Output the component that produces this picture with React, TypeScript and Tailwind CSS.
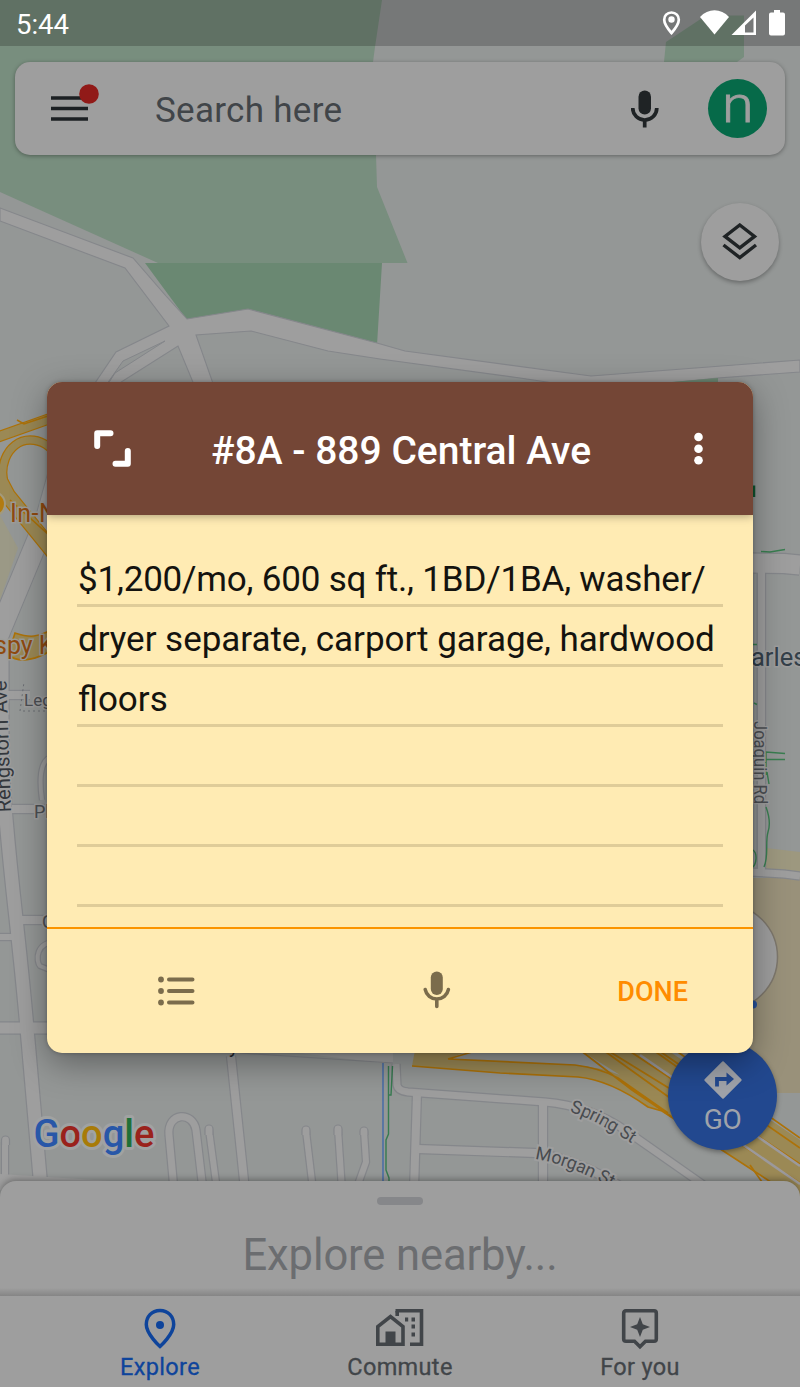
import type { ReactNode } from "react";

const EDGE = "#85878b";
const ROAD = "#9e9e9e";
const FWY = "#9b8955";
const FWY_EDGE = "#ad7208";

function Streets({ items, c = ROAD, e = EDGE }: { items: [string, number][]; c?: string; e?: string }) {
  return (
    <g fill="none" strokeLinejoin="round">
      {items.map(([d, w]) => (
        <path key={"e" + d} d={d} stroke={e} strokeWidth={w + 2.4} />
      ))}
      {items.map(([d, w]) => (
        <path key={"f" + d} d={d} stroke={c} strokeWidth={w} />
      ))}
    </g>
  );
}

function MapCanvas() {
  return (
    <svg
      className="absolute inset-0 font-[Roboto,sans-serif]"
      width="800"
      height="1387"
      viewBox="0 0 800 1387"
    >
      <rect width="800" height="1387" fill="#949796" />
      <path d="M0 0H382L375 47L373 62L376 155L377 187L407.5 263H158L0 192Z" fill="#788e7e" />
      <path d="M664 62L666 42L706 15.500H744V57L737 62Z" fill="#788e7e" />
      <path d="M145 263H382L377 345L250 318L187 320Z" fill="#6a8872" />

      {/* northern roads */}
      <path
        d="M0 208L133 258L166 296L187 319L248 309L377 343L405 351L591 376L800 360V372L718 378L600 390L520 378L380 359L328 351L251 331L196 335L216 392H197L178 346L115 386H93L116 352L169 326L125 268L0 221Z"
        fill={ROAD}
        stroke={EDGE}
        strokeWidth="1.1"
      />
      <path d="M104 388L123 361L165 341L115 373L108 384Z" fill="#949796" stroke={EDGE} strokeWidth="1" />
      <path d="M660 383L718 378V386H660Z" fill="#6f8a75" />

      {/* west side */}
      <path d="M0 515L18 548L0 600Z" fill="#9b9986" />
      <path d="M60 470L46 520L-4 640" stroke={EDGE} strokeWidth="23" fill="none" />
      <path d="M60 470L46 520L-4 640" stroke={ROAD} strokeWidth="21" fill="none" />
      <Streets
        items={[
          ["M2 640V760C6 850 18 920 28 1040L42 1200", 13],
          ["M0 695H30", 8],
          ["M12 809H60", 8],
          ["M20 920H60", 8],
          ["M-4 937H14", 6],
          ["M-4 1028H60", 11],
          ["M60 758C42 752 38 772 42 800", 4],
          ["M60 942C34 940 36 962 40 966L60 974", 4],
        ]}
      />
      <path d="M60 711L20 711L24 682" stroke="#6b6e73" strokeWidth="1" strokeDasharray="2 3" fill="none" />
      <Streets
        c={FWY}
        e={FWY_EDGE}
        items={[
          ["M-5 438L60 415", 9],
          ["M12 500C-8 470 8 440 30 440C42 440 50 446 58 456", 7],
          ["M-8 466L8 496L60 560", 14],
        ]}
      />
      <path d="M10 500L60 545M17 420L24 424L60 412" stroke={FWY_EDGE} strokeWidth="1.6" fill="none" />
      <path d="M60 622C40 642 24 636 15 633L8 655C20 664 38 660 60 645Z" fill={FWY} stroke={FWY_EDGE} strokeWidth="1.6" />
      <circle cx="-7" cy="504" r="12" fill="#b27b10" stroke="#a39a7c" strokeWidth="2" />
      <g fill="#8f4a10" stroke="#9c9c98" strokeWidth="3" paintOrder="stroke" fontSize="25">
        <text x="10" y="522" letterSpacing="0.5">In-N</text>
        <text x="-6" y="654">spy K</text>
      </g>
      <g fill="#4c4f53" stroke="#9e9e9e" strokeWidth="3" paintOrder="stroke" fontSize="18">
        <text x="24" y="706" fontSize="17">Leg</text>
        <text x="34" y="818">Pl</text>
        <text x="42" y="928">C</text>
        <text transform="translate(11 812) rotate(-92)" fontSize="20" fill="#33373c">Rengstorff Ave</text>
      </g>

      {/* east side */}
      <path d="M766 848L800 852V881H766Z" fill="#9d987f" />
      <path d="M750 878H800V1093H750Z" fill="#99917a" />
      <Streets
        items={[
          ["M750 563L784 563.500L800 565", 19],
          ["M761.500 570V872", 7],
          ["M750 872L784 874L800 876", 7],
        ]}
      />
      <path d="M757 574V868M753 574V868" stroke={EDGE} strokeWidth="1" />
      <circle cx="724.500" cy="957" r="53" fill={ROAD} stroke="#7d776c" strokeWidth="1.5" />
      <circle cx="753" cy="1004.500" r="4" fill="#2855a2" />
      <g fill="none" stroke="#397e50" strokeWidth="1.4">
        <path d="M761 551.500L770 552L785 549.500M766 775V752L785 753.500M766 759.500H785M767 772L769 784M766 807C770 818 770 826 768 832C765 842 769 856 764 867M753 850C758 854 756 864 753 867M753 644.500H757M754 703L757 704.500" />
        <path d="M754 485.500V497" stroke="#0f5a32" strokeWidth="2.500" />
      </g>
      <g fill="#34404a" stroke="#9e9e9e" strokeWidth="3" paintOrder="stroke">
        <text x="751" y="665.500" fontSize="25.500">arles</text>
        <text transform="translate(754 721) rotate(90)" fontSize="18" fill="#4c4f53" textLength="83" lengthAdjust="spacingAndGlyphs">Joaquin Rd</text>
      </g>

      {/* southern streets */}
      <path d="M60 1045H230L382 1063L393 1063V1045Z" fill={ROAD} />
      <path d="M240 1053L393 1063" stroke={EDGE} strokeWidth="1.2" />
      <Streets
        items={[
          ["M231 1056L245 1190", 8],
          ["M396 1064L397 1085Q398 1091 408 1092L545 1102Q590 1106 625 1130L725 1200", 7],
          ["M417 1093L414 1190", 8],
          ["M543 1104V1190", 8],
          ["M418 1149L535 1153Q590 1162 640 1200", 8],
          ["M174 1190L169 1135C167 1112 193 1111 196 1130L203 1190", 7],
          ["M209 1130L217 1190", 6],
          ["M306 1131L313 1190", 6],
          ["M338 1129L342 1190", 6],
          ["M364 1131L366 1162L356 1190", 6],
          ["M5 1142V1190", 6],
        ]}
      />
      <path d="M0 1174L160 1184V1190H0Z" fill={ROAD} />
      <g fill={ROAD} stroke={EDGE} strokeWidth="1.2">
        <path d="M205 1135V1129a4 4 0 0 1 8 0V1135M302 1135V1130a4 4 0 0 1 8 0V1135M334 1135V1129a4 4 0 0 1 8 0V1135M360 1135V1131a4 4 0 0 1 8 0V1135M1.500 1145V1140a4 4 0 0 1 8 0V1145" />
      </g>
      <path d="M383 1063V1190" stroke="#4169a8" strokeWidth="1.4" />
      <path d="M388.500 1066V1134L386 1140V1170L389 1178V1190M392.500 1066L391 1095H389" stroke="#367b50" strokeWidth="1.4" fill="none" />

      {/* freeway, south east */}
      <path d="M415 1050L412 1066L500 1073L578 1077Q610 1080 648 1107L662 1111L800 1201V1140L660 1045Z" fill={FWY} />
      <path d="M470 1050L580 1050L620 1075Q600 1067 575 1065L448 1059Z" fill="#949796" />
      <g fill="none" stroke={FWY_EDGE} strokeWidth="1.7">
        <path d="M412 1066L500 1073L578 1077Q610 1080 648 1107L662 1111L800 1201" />
        <path d="M448 1059L575 1065Q600 1068 618 1078L668 1113M448 1059L472 1052M580 1050L632 1090L672 1117M603 1050L670 1098L800 1183M607 1050L672 1090M628 1050L800 1164M653 1050L690 1076M658 1050L800 1148M675 1050L800 1138M750 1165L762 1182" />
      </g>
      <path d="M640 1055L800 1166M736 1140L800 1184" stroke="#9b999c" strokeWidth="2.500" />
      <path d="M779 1045H800V1093H779Z" fill="#99917a" />

      <g fill="#484b4f" stroke="#9e9e9e" strokeWidth="4" paintOrder="stroke" fontSize="18">
        <path id="spring" d="M570 1112Q594 1118 650 1155" fill="none" stroke="none" />
        <path id="morgan" d="M535 1159Q570 1164 625 1195" fill="none" stroke="none" />
        <text letterSpacing="-0.300"><textPath href="#spring">Spring St</textPath></text>
        <text letterSpacing="-0.100"><textPath href="#morgan">Morgan St</textPath></text>
      </g>
      <text x="229" y="1053" fontSize="20" fill="#26292d">y</text>

      <text
        x="33.500"
        y="1147"
        fontSize="39.500"
        fontWeight="500"
        textLength="121"
        lengthAdjust="spacingAndGlyphs"
        stroke="#a0a2a2"
        strokeWidth="6"
        strokeLinejoin="round"
        paintOrder="stroke"
      >
        <tspan fill="#2857a8">G</tspan>
        <tspan fill="#9a221c">o</tspan>
        <tspan fill="#a87b08">o</tspan>
        <tspan fill="#2857a8">g</tspan>
        <tspan fill="#1f7038">l</tspan>
        <tspan fill="#9a221c">e</tspan>
      </text>
    </svg>
  );
}

function StatusBar() {
  return (
    <header className="flex h-[46px] items-center justify-between bg-black/20 pl-4">
      <span className="pt-[3px] text-[27.5px] leading-none text-white">5:44</span>
      <svg width="140" height="46" viewBox="660 0 140 46" fill="white">
        <path d="M671.500 12.500C667 12.500 664.200 15.800 664.200 19.700C664.200 24.500 671.500 33 671.500 33S678.800 24.500 678.800 19.700C678.800 15.800 676 12.500 671.500 12.500Z" fill="none" stroke="white" strokeWidth="2.700" />
        <circle cx="671.500" cy="19.500" r="3.200" />
        <path d="M714.500 34.500L700 17C708 8 721 8 729 17Z" />
        <path fillRule="evenodd" d="M731.500 35L756 10.500V35ZM745 32.500H753.500V17.500L745 25.500Z" />
        <path d="M774 10H780V12.500H783Q785 12.500 785 14.500V33.500Q785 35.500 783 35.500H771Q769 35.500 769 33.500V14.500Q769 12.500 771 12.500H774Z" />
      </svg>
    </header>
  );
}

function SearchBar() {
  return (
    <div className="mx-[15px] mt-4 flex h-[93px] items-center rounded-[15px] bg-[#9e9e9e] shadow-[0_1px_4px_rgba(0,0,0,0.35)]">
      <svg className="ml-9 shrink-0" width="48" height="50" viewBox="51 83 48 50">
        <path d="M51 97H88M51 107.500H88M51 118H88" stroke="#1c2023" strokeWidth="3.700" />
        <circle cx="89" cy="93" r="9.800" fill="#911a18" />
      </svg>
      <span className="ml-[56px] grow pt-[3px] text-[35px] leading-none tracking-[0.3px] text-[#414549]">Search here</span>
      <svg className="mr-[49px] shrink-0" width="28" height="38" viewBox="631 91 28 38">
        <rect x="638.500" y="91.500" width="12.500" height="24" rx="6.250" fill="#1f2325" />
        <path d="M632.700 109A12 12 0 0 0 656.800 109M644.700 120.500V128.500" fill="none" stroke="#1f2325" strokeWidth="3.700" />
      </svg>
      <span className="mr-[18px] flex size-[59px] shrink-0 items-center justify-center rounded-full bg-[#066a49] text-[50px] leading-none font-light text-[#9e9e9e]">
        <span className="-mt-[7px] scale-x-115 [-webkit-text-stroke:0.8px_currentColor]">n</span>
      </span>
    </div>
  );
}

function LayersButton() {
  return (
    <button className="mt-12 mr-[21px] flex size-[78px] items-center justify-center self-end rounded-full bg-[#9e9e9e] shadow-[0_2px_4px_rgba(0,0,0,0.3)]">
      <svg width="36" height="38" viewBox="722 223 36 38" fill="none" stroke="#1f2325" strokeWidth="3.400">
        <path d="M739.800 225L754.500 236.400L739.800 247.800L725 236.400Z" />
        <path d="M723.500 245L739.800 257.600L756 245" />
      </svg>
    </button>
  );
}

function GoButton() {
  return (
    <button className="mr-[23px] mb-[31px] flex size-[109px] flex-col items-center self-end rounded-full bg-[#22488f] pt-[19px] text-[#9fa3aa] shadow-[0_2px_5px_rgba(0,0,0,0.35)]">
      <svg width="40" height="40" viewBox="0 0 40 40">
        <rect x="6.500" y="6.500" width="27" height="27" rx="1" transform="rotate(45 20 20)" fill="#a0a3aa" />
        <path d="M14 26.500V19H26" fill="none" stroke="#22488f" strokeWidth="3.800" />
        <path d="M23.500 12.500L31 19L23.500 25.500Z" fill="#22488f" />
      </svg>
      <span className="mt-[6px] text-[28px] leading-none tracking-[-0.5px]">GO</span>
    </button>
  );
}

function NavItem({ label, color, children }: { label: string; color: string; children: ReactNode }) {
  return (
    <div className={`flex w-[240px] flex-col items-center ${color}`}>
      <svg width="50" height="44" viewBox="0 0 50 44" fill="none" stroke="currentColor">
        {children}
      </svg>
      <span className="mt-[4px] text-[23.5px] leading-[26px] tracking-[0.35px] [-webkit-text-stroke:0.3px_currentColor]">{label}</span>
    </div>
  );
}

function BottomArea() {
  return (
    <div>
      <div className="flex h-[115px] flex-col items-center rounded-t-[16px] bg-[#9e9e9e] pt-4 shadow-[0_-2px_6px_rgba(0,0,0,0.3)]">
        <div className="h-2 w-[46px] rounded-full bg-[#86878a]" />
        <p className="mt-[28px] text-[43.5px] leading-[46px] tracking-[-0.1px] text-[#6b6d70]">Explore nearby...</p>
        <div className="mt-auto h-2 w-full bg-linear-to-b from-transparent to-[#858585]" />
      </div>
      <nav className="flex h-[91px] justify-center bg-[#9e9e9e] pt-[10px]">
        <NavItem label="Explore" color="text-[#0e449b]">
          <path d="M25 4.500C16.500 4.500 11.300 11 11.300 18.500C11.300 28 25 40.500 25 40.500S38.700 28 38.700 18.500C38.700 11 33.500 4.500 25 4.500Z" strokeWidth="3.500" />
          <circle cx="25" cy="19" r="4" fill="currentColor" stroke="none" />
        </NavItem>
        <NavItem label="Commute" color="text-[#414549]">
          <path d="M2.800 20.500V38.200H28V20.500L15.500 10.500Z" strokeWidth="3.600" />
          <path d="M10.500 38V25.500H20.500V38" fill="currentColor" stroke="none" />
          <path d="M20.500 4.800H46.500V38.200H35" strokeWidth="3.600" />
          <path d="M22.200 5V10" strokeWidth="3.600" />
          <path d="M30 13.500H33.200M36.500 13.500H40M36.500 20.500H40M36.500 28.500H40" strokeWidth="3.800" />
        </NavItem>
        <NavItem label="For you" color="text-[#414549]">
          <path d="M11 4.800H39Q41.300 4.800 41.300 7.200V33Q41.300 35.300 39 35.300H30.500L25 40.800L19.500 35.300H11Q8.700 35.300 8.700 33V7.200Q8.700 4.800 11 4.800Z" strokeWidth="3.600" />
          <path d="M25 11L27.800 18.200L35 21L27.800 23.800L25 31L22.200 23.800L15 21L22.200 18.200Z" fill="currentColor" stroke="none" />
        </NavItem>
      </nav>
    </div>
  );
}

const lines: { text: string; tracking: string }[] = [
  { text: "$1,200/mo, 600 sq ft., 1BD/1BA, washer/", tracking: "tracking-[-0.19px]" },
  { text: "dryer separate, carport garage, hardwood", tracking: "tracking-[-0.04px]" },
  { text: "floors", tracking: "tracking-normal" },
  { text: "", tracking: "" },
  { text: "", tracking: "" },
  { text: "", tracking: "" },
];

function NoteDialog() {
  return (
    <section className="absolute top-[382px] left-[47px] flex h-[671px] w-[706px] flex-col overflow-hidden rounded-[15px] bg-[#ffebb3] shadow-[0_10px_34px_rgba(0,0,0,0.36),0_0_4px_rgba(0,0,0,0.25)]">
      <div className="relative flex h-[133px] shrink-0 items-center bg-[#744636] text-white shadow-[0_1px_9px_rgba(0,0,0,0.35)]">
        <svg className="ml-[47px]" width="37" height="37" viewBox="0 0 37 37" fill="none" stroke="white" strokeWidth="6" strokeLinecap="round" strokeLinejoin="round">
          <path d="M3.200 16V3.200H16.500M21.500 33.800H33.800V21" />
        </svg>
        <h1 className="ml-[80px] pt-[5px] text-[39px] leading-none font-medium whitespace-nowrap">#8A - 889 Central Ave</h1>
        <svg className="mr-[49px] ml-auto" width="11" height="34" viewBox="0 0 11 34" fill="white">
          <circle cx="5.500" cy="5" r="4.300" />
          <circle cx="5.500" cy="16.700" r="4.300" />
          <circle cx="5.500" cy="28.300" r="4.300" />
        </svg>
      </div>
      <div className="flex grow flex-col px-[30px] pt-[32px]">
        {lines.map(({ text, tracking }, i) => (
          <p
            key={i}
            className={`h-[60px] border-b-[3px] border-[#dfcc99] pl-[1px] text-[35px] leading-[66px] whitespace-nowrap text-[#14130f] ${tracking}`}
          >
            {text}
          </p>
        ))}
      </div>
      <div className="flex h-[126px] shrink-0 items-center border-t-2 border-[#fb9400]">
        <svg className="ml-[111px]" width="37" height="30" viewBox="0 0 37 30" stroke="#7b6c4c" fill="#7b6c4c">
          <path d="M11 3.500H34.500M11 15H34.500M11 26.500H34.500" strokeWidth="4" strokeLinecap="round" />
          <g stroke="none">
            <circle cx="3" cy="3.500" r="2.900" />
            <circle cx="3" cy="15" r="2.900" />
            <circle cx="3" cy="26.500" r="2.900" />
          </g>
        </svg>
        <svg className="mb-[3px] ml-[228px]" width="28" height="38" viewBox="0 0 28 38">
          <rect x="7.800" y="0.500" width="12" height="23.500" rx="6" fill="#7b6c4c" />
          <path d="M2.200 18.500A11.800 11.600 0 0 0 25.400 18.500M13.800 30V35.500" fill="none" stroke="#7b6c4c" strokeWidth="3.600" strokeLinecap="round" />
        </svg>
        <button className="mr-[65px] ml-auto pt-[3px] text-[27px] leading-none font-medium text-[#ff8c00]">DONE</button>
      </div>
    </section>
  );
}

export default function App() {
  return (
    <main className="relative h-[1387px] w-[800px] overflow-hidden font-[Roboto,sans-serif]">
      <MapCanvas />
      <div className="relative flex h-full flex-col">
        <StatusBar />
        <SearchBar />
        <LayersButton />
        <div className="grow" />
        <GoButton />
        <BottomArea />
      </div>
      <NoteDialog />
    </main>
  );
}
